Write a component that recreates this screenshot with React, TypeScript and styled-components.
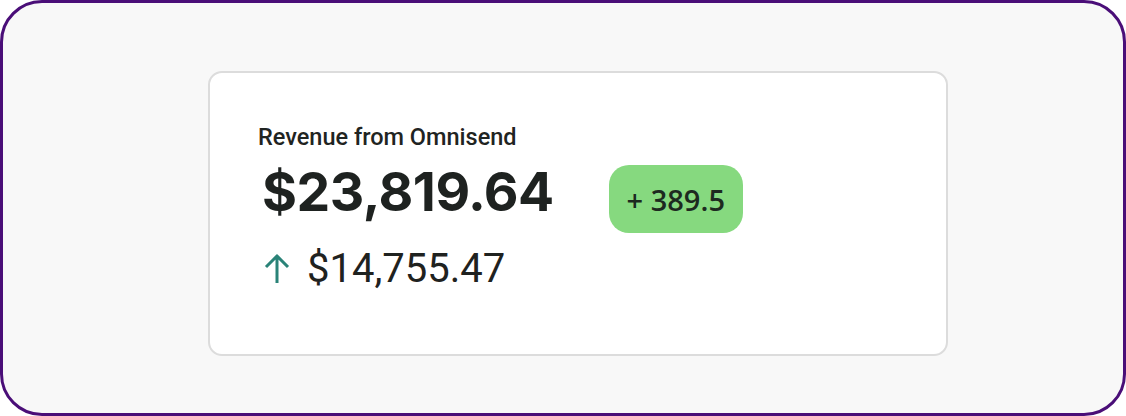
import React from "react";
import styled, { createGlobalStyle } from "styled-components";

const Global = createGlobalStyle`
  html, body { margin: 0; padding: 0; background: #ffffff; }
  body { font-family: Roboto, "Liberation Sans", sans-serif; }
`;

const Frame = styled.div`
  box-sizing: border-box;
  width: 1126px;
  height: 416px;
  border: 3px solid #4a0e78;
  border-radius: 42px;
  background: #f8f8f8;
  display: flex;
  align-items: flex-start;
  padding: 68px 0 0 205px;
`;

const Card = styled.div`
  box-sizing: border-box;
  width: 740px;
  height: 285px;
  background: #ffffff;
  border: 2px solid #dcdcdc;
  border-radius: 14px;
  padding: 50px 0 0 48px;
  display: flex;
  flex-direction: column;
`;

const Title = styled.div`
  font-family: Roboto, "Liberation Sans", sans-serif;
  font-weight: 500;
  font-size: 23.5px;
  line-height: 28px;
  color: #1f2422;
`;

const MainRow = styled.div`
  display: flex;
  align-items: flex-start;
  gap: 55px;
  margin-top: 9px;
`;

const BigValue = styled.div`
  font-family: Inter, "Liberation Sans", sans-serif;
  font-weight: 700;
  font-size: 53.5px;
  line-height: 64px;
  letter-spacing: -0.5px;
  color: #1e2220;
  padding-left: 4px;
`;

const Badge = styled.div`
  box-sizing: border-box;
  margin-top: 5px;
  height: 68px;
  width: 134px;
  border-radius: 20px;
  background: #86d97f;
  display: flex;
  align-items: center;
  justify-content: center;
  font-family: "Open Sans", "Noto Sans", sans-serif;
  font-weight: 600;
  font-size: 29px;
  color: #1d2a1f;
`;

const SubRow = styled.div`
  display: flex;
  align-items: center;
  gap: 16px;
  margin-top: 13px;
  padding-left: 5px;
`;

const SubValue = styled.div`
  font-family: Roboto, "Liberation Sans", sans-serif;
  font-weight: 400;
  font-size: 40px;
  line-height: 46px;
  color: #1f2220;
`;

const UpArrow = () => (
  <svg width="28" height="32" viewBox="0 0 28 32" fill="none">
    <path d="M14 30 V3 M3 14 L14 3 L25 14" stroke="#2a8378" strokeWidth="3" strokeLinecap="butt" strokeLinejoin="miter" />
  </svg>
);

export default function App() {
  return (
    <>
      <Global />
      <Frame>
        <Card>
          <Title>Revenue from Omnisend</Title>
          <MainRow>
            <BigValue>$23,819.64</BigValue>
            <Badge>+ 389.5</Badge>
          </MainRow>
          <SubRow>
            <UpArrow />
            <SubValue>$14,755.47</SubValue>
          </SubRow>
        </Card>
      </Frame>
    </>
  );
}
